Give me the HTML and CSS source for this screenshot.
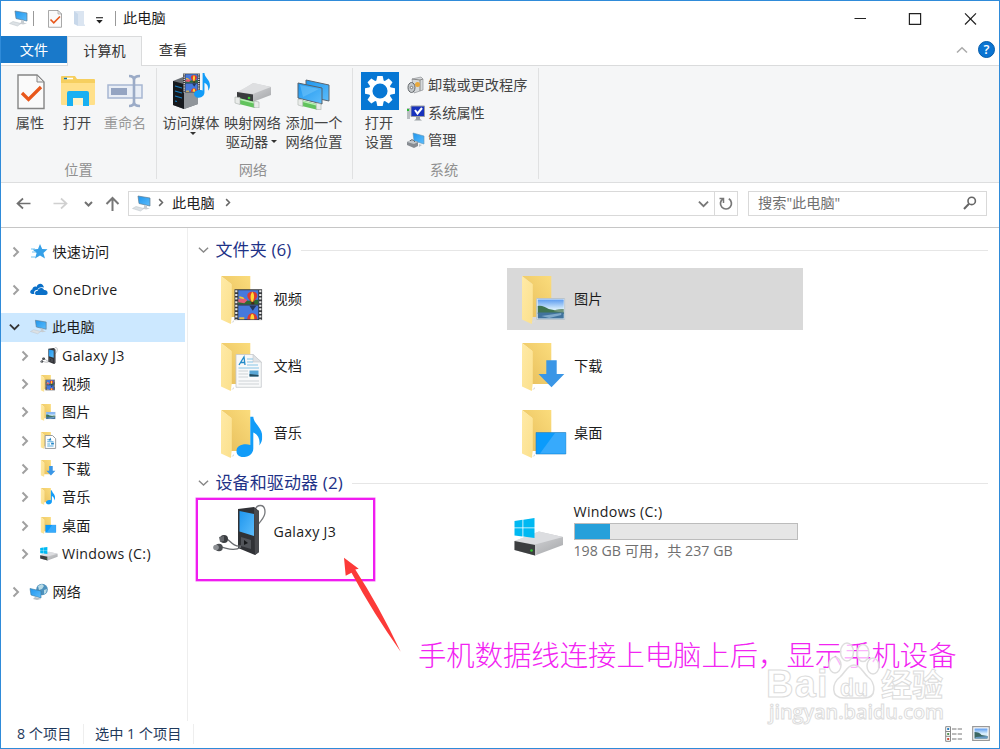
FILE: index.html
```html
<!DOCTYPE html>
<html lang="zh-CN">
<head>
<meta charset="utf-8">
<title>此电脑</title>
<link rel="stylesheet" href="styles.css">
</head>
<body>
<svg class="defs" aria-hidden="true">
  <defs>
    <linearGradient id="gBack" x1="0" y1="1" x2="1" y2="0"><stop offset="0" stop-color="#e6bd5a"/><stop offset="1" stop-color="#fbdc7c"/></linearGradient>
    <linearGradient id="gFlap" x1="0" y1="0" x2="1" y2="1"><stop offset="0" stop-color="#ffeaa6"/><stop offset="1" stop-color="#fbe08d"/></linearGradient>
    <linearGradient id="gScreen" x1="0" y1="0" x2="1" y2="1"><stop offset="0" stop-color="#1e96ee"/><stop offset="1" stop-color="#5cbcfb"/></linearGradient>
    <linearGradient id="gSky" x1="0" y1="0" x2="0" y2="1"><stop offset="0" stop-color="#5b9bf0"/><stop offset=".5" stop-color="#d5ecfb"/><stop offset="1" stop-color="#e4f1fa"/></linearGradient>
    <linearGradient id="gMetal" x1="0" y1="0" x2="1" y2="1"><stop offset="0" stop-color="#e4e4e6"/><stop offset="1" stop-color="#a4a6a9"/></linearGradient>
  </defs>
  <symbol id="folder" viewBox="0 0 48 50">
    <path d="M0 0H29.3V41H10V8z" fill="url(#gBack)"/>
    <path d="M0 0 10.8 8.2V40L9.8 48 0 43.6z" fill="url(#gFlap)"/>
    <path d="M10 47l3-3v2z" fill="#ddd"/>
  </symbol>
  <symbol id="film" viewBox="0 0 28 31">
    <path d="M0 0H28V31H0z" fill="#35373b"/>
    <path d="M4 1H24V15H4zM4 16.300H24V30H4z" fill="#4679dc"/>
    <path d="M4 11l5-1 5 1.500 10-1V15H4z" fill="#2d6a33"/>
    <path d="M4 10l6-1 3 2-3 3-6-1z" fill="#e35b74"/><path d="M5 7l4 1 1 2-5-1z" fill="#f3c634"/>
    <path d="M18 2.500c6 0 6 5.500 3 8l-2 2h-2l-2-2c-3-2.500-3-8 3-8z" fill="#dc3b30"/>
    <path d="M18 2.500c2.500 2 2 7 .5 10h-1C16 10 15.500 6 18 2.500z" fill="#ffd836"/>
    <path d="M17 13h3v2h-3z" fill="#4a2410"/><path d="M15 16.500h7l-3.500 5z" fill="#25375c"/>
    <path d="M13 30c0-8 10-8 10 0z" fill="#dc3b30"/><path d="M16 30c0-7 4-7 4 0z" fill="#ffd836"/><path d="M5 28h5v2H5z" fill="#e8bd45"/>
    <path d="M2 1.200V31M26 1.200V31" stroke="#e6e6e6" stroke-width="2.200" stroke-dasharray="2 1.600"/>
  </symbol>
  <symbol id="note" viewBox="0 0 26 41">
    <path d="M14 0h3c0 7 9 11 9 20 0 4-1 6-3 9 1-6-1-11-6-13V32c0 5-4 8-9 8.500S0 38 0 34.500c0-5 7-8 14-6z" fill="#129cf8"/>
  </symbol>
  <symbol id="photo" viewBox="0 0 29 22">
    <path d="M.5.5h28v21H.5z" fill="#f2f7fb" stroke="#b9c4cc"/>
    <path d="M1.500 1.500h26v19h-26z" fill="url(#gSky)"/>
    <path d="M1.500 8c4-1 7 1 11 3l15 3v2h-26z" fill="#3f7450"/><path d="M17 13c4-2 7-2 10.500-2v4z" fill="#71957c"/>
    <path d="M1.500 14.500h26v6h-26z" fill="#41739d"/><path d="M5 18l20-3v2l-12 3z" fill="#7fa9c9"/>
  </symbol>
  <symbol id="f-video" viewBox="0 0 48 50"><use href="#folder" width="48" height="50"/><use href="#film" x="13.300" y="13" width="28" height="31.300"/></symbol>
  <symbol id="f-photo" viewBox="0 0 48 50"><use href="#folder" width="48" height="50"/><use href="#photo" x="14" y="22" width="29.500" height="22"/></symbol>
  <symbol id="f-doc" viewBox="0 0 48 50"><use href="#folder" width="48" height="50"/>
    <path d="M15 11.500H32L40.300 19V44.300H15z" fill="#f8f9fa" stroke="#c5c8cb" stroke-width=".8"/><path d="M32 11.500V19h8.300z" fill="#dfe2e5" stroke="#c5c8cb" stroke-width=".6"/>
    <path d="M18 22l5-8 1 8M19.500 19.500h4.500" fill="none" stroke="#238bc9" stroke-width="1.300"/><path d="M26 16h6M26 19h6M26 22h11M17.500 25H38" stroke="#86c4e6"/>
    <path d="M28.500 27.500H37.500V33.500H28.500z" fill="#59a6d5"/><path d="M28.500 31l9 1v1.500h-9z" fill="#244c5e"/>
    <path d="M17.500 28H27M17.500 31H27M17.500 34H27M17.500 38H38M17.500 41H38" stroke="#ced3d6"/></symbol>
  <symbol id="f-down" viewBox="0 0 48 50"><use href="#folder" width="48" height="50"/><path d="M24.300 17.300H34.700V31H42.300L29.500 44.200 16.500 31H24.300z" fill="#3a96e6"/></symbol>
  <symbol id="f-music" viewBox="0 0 48 50"><use href="#folder" width="48" height="50"/><use href="#note" x="15.300" y="6.500" width="26" height="41"/></symbol>
  <symbol id="f-desk" viewBox="0 0 48 50"><use href="#folder" width="48" height="50"/><path d="M14 22.500H43.800V44H14z" fill="#0b9bfb" stroke="#287db8" stroke-width=".6"/><path d="M33 23H43.500V43.500H18z" fill="#37aafc"/></symbol>
  <symbol id="s-doc" viewBox="0 0 48 50"><use href="#folder" width="48" height="50"/><path d="M13 10H34L43 19V47H13z" fill="#fff" stroke="#8b9094" stroke-width="2.500"/><path d="M19 22h8M19 28h18M19 34h8M19 40h18" stroke="#55a9dc" stroke-width="3"/><path d="M28 16l-5 8h8zM30 31h8v5h-8z" fill="#2286c8"/></symbol>
  <symbol id="pc" viewBox="0 0 20 17">
    <path d="M6 1 18 3V11L7 8.500z" fill="url(#gScreen)" stroke="#5d7d94" stroke-width=".7"/>
    <path d="M12 10l3 .8v2l3 .6-4 1-4-1 2-.8z" fill="#c7cdd2"/>
    <path d="M.5 13.500 4 11.500 12 13.500 8.500 16z" fill="#dce1e5" stroke="#b9c0c6" stroke-width=".5"/>
  </symbol>
  <symbol id="drive" viewBox="0 0 50 40">
    <path d="M.5 24 25 14.500 49 20V28L21 38.500.5 33z" fill="url(#gMetal)"/>
    <path d="M.5 24 25 14.500 49 20 21 27.500z" fill="#dcdde0"/>
    <path d="M.5 24 21 28V38.500L.5 33z" fill="#3c3e40"/><path d="M21 28v10.500l2-.7V27.500z" fill="#c4c5c7"/>
    <circle cx="17.500" cy="33.500" r="1.300" fill="#35c62f"/>
  </symbol>
  <symbol id="winDrive" viewBox="0 0 50 40"><use href="#drive" width="50" height="40"/>
    <path d="M.5 4 8.500 2.800V10.500H.5zM9.300 2.700 20.500 1V10.500H9.300zM.5 11.300H8.500V19.500L.5 18.500zM9.300 11.300H20.500V21L9.300 19.600z" fill="#00b9f2"/></symbol>
  <symbol id="netDrive" viewBox="0 0 38 27">
    <path d="M3 11 19 1 37 5V13L19 20 3 17z" fill="url(#gMetal)"/><path d="M3 10 20 1 37 5 19 12z" fill="#dedfe1"/><path d="M3 10 19 12.500V20L3 17z" fill="#3a3c3e"/><circle cx="15" cy="16" r="1.300" fill="#39cc32"/>
    <use href="#pipe" x="0" y="14" width="26" height="12"/>
  </symbol>
  <symbol id="pipe" viewBox="0 0 26 12"><path d="M5 2 21 6V12L5 8z" fill="#62c35d"/><path d="M5 3 21 7" stroke="#b8efb4" stroke-width="1.500"/><path d="M1 1l5 .5v7L1 7zM20 5l5 1v6l-5-.5z" fill="#e8ebe9" stroke="#aab0ac" stroke-width=".6"/></symbol>
  <symbol id="player" viewBox="0 0 54 52">
    <path d="M42 7C43 0 52-1 52 8c0 6-5 9-7 13" fill="none" stroke="#77797c" stroke-width="1.300"/>
    <path d="M25 5 41 3 46 7V48L42 51 25 44z" fill="#303236"/><path d="M41 4 46 7V48L42 51z" fill="#494b4f"/>
    <path d="M26.500 7 41 10V32L26.500 27.500z" fill="url(#gScreen)"/>
    <path d="M28 33 38 36V45L28 42z" fill="#515459"/><path d="M31 36l4 3-4 2z" fill="#17191b"/>
    <path d="M13 34c5 4 8 9 15 8M8 43c6 1 13 5 20 0" fill="none" stroke="#696c70" stroke-width="1.300"/>
    <circle cx="11" cy="35" r="4" fill="#3a3d40"/><path d="M6 33l5-1v5l-4 1z" fill="#66696d"/>
    <circle cx="6" cy="43.500" r="3.800" fill="#4b4e52"/><circle cx="3" cy="43.500" r="2.800" fill="#8c8f93"/>
  </symbol>
  <symbol id="right" viewBox="0 0 8 12"><path d="M1.500 1.500 6 6 1.500 10.500" fill="none" stroke="currentColor" stroke-width="2"/></symbol>
  <symbol id="down" viewBox="0 0 12 8"><path d="M1 1.500 6 6.300 11 1.500" fill="none" stroke="currentColor" stroke-width="1.500"/></symbol>
  <symbol id="checkDoc" viewBox="0 0 28 36"><path d="M1 1H20L27 8V34.500H1z" fill="#fafafa" stroke="#858585" stroke-width="1.400"/><path d="M20 1V8h7z" fill="#eee" stroke="#858585"/><path d="M5 19 11.500 25.500 24 13" fill="none" stroke="#e8571b" stroke-width="3.300"/></symbol>
</svg>

<div class="window">
  <header class="titlebar">
    <svg class="tb-pc"><use href="#pc"/></svg>
    <i class="tb-sep"></i>
    <svg class="tb-check"><use href="#checkDoc"/></svg>
    <svg class="tb-folder" viewBox="0 0 12 17"><path d="M1 1h10v13l1 1v1H5z" fill="#dbe5f1"/><path d="M1 1l4 3v12l-4-2z" fill="#c8d8ea"/></svg>
    <svg class="tb-drop" viewBox="0 0 7 7"><path d="M0 .7h7" stroke="#333" stroke-width="1.200"/><path d="M.3 3h6.400L3.500 6.500z" fill="#222"/></svg>
    <i class="tb-sep tb-sep2"></i>
    <span class="title">此电脑</span>
    <svg class="controls" viewBox="0 0 120 14"><g fill="none" stroke="#222" stroke-width="1.200"><path d="M.5 6.500H12M55.400 1.600H66.600V12.400H55.400zM111 1.300 122 12.500M122 1.300 111 12.500"/></g></svg>
  </header>

  <nav class="tabs">
    <span class="tab file">文件</span><span class="tab active">计算机</span><span class="tab view">查看</span>
    <svg class="collapse"><use href="#down"/></svg>
    <span class="help">?</span>
  </nav>

  <section class="ribbon">
    <div class="group g1">
      <div class="buttons">
        <div class="big w46"><div class="ico doc"><svg width="28" height="36"><use href="#checkDoc"/></svg></div>属性</div>
        <div class="big w48"><div class="ico open-ico"><svg width="36" height="36" viewBox="0 0 36 36"><path d="M1 3q0-1 1-1h13l2 3h17q1 0 1 1v24H1z" fill="#f6cf5f"/><path d="M1 9h34v21q0 1-1 1H2q-1 0-1-1z" fill="#ffe08a"/><path d="M4 4.500h9" stroke="#fff" stroke-width="1.500"/><path d="M4 4.500h3" stroke="#17a" stroke-width="1.500"/><path d="M7 19q0-2 2-2h18q2 0 2 2v13h-6v-8H13v8H7z" fill="#18b0f2"/><path d="M13 24h10v7H13z" fill="#fff2c5"/></svg></div>打开</div>
        <div class="big w48 disabled"><div class="ico"><svg width="36" height="36" viewBox="0 0 36 36"><path d="M1 11H35V24H1z" fill="#e9eef6" stroke="#a7b7d2" stroke-width="1.500"/><path d="M4 14H20V21H4z" fill="#94a4c2"/><path d="M22 2q5 0 5 4v22q0 4-5 4M33 2q-6 0-6 4v22q0 4 6 4" fill="none" stroke="#9babc7" stroke-width="2.600"/></svg></div>重命名</div>
      </div>
      <div class="caption">位置</div>
    </div>
    <div class="group g2">
      <div class="buttons">
        <div class="big w62"><div class="ico"><svg width="38" height="38" viewBox="0 0 38 38"><path d="M1 9 11 5 26 9V32L12 37 1 33z" fill="#6b7075"/><path d="M1 9 12 12V37L1 33z" fill="#16191d"/><path d="M12 12 26 9V32L12 37z" fill="#90959a"/><path d="M3 14l7 2M3 19l7 2M3 24l7 2M3 29l2 .5" stroke="#197fc1" stroke-width="1.200"/><use href="#film" x="11" y="1" width="17" height="20"/><use href="#note" x="22" y="1" width="16" height="25"/></svg></div>访问媒体<i class="tri below"></i></div>
        <div class="big w61"><div class="ico"><svg class="netd" width="38" height="27"><use href="#netDrive"/></svg></div>映射网络<br><span>驱动器<i class="tri"></i></span></div>
        <div class="big w62"><div class="ico"><svg class="netd" width="36" height="32" viewBox="0 0 36 32"><path d="M10 2 33 7V23L10 18z" fill="url(#gScreen)" stroke="#5c6670"/><path d="M2 5 26 10V26L2 20z" fill="url(#gScreen)" stroke="#56616b"/><path d="M4 7 23 11 7 19z" fill="#77c7fa" opacity=".5"/><use href="#pipe" x="1" y="20" width="25" height="12"/></svg></div>添加一个<br>网络位置</div>
      </div>
      <div class="caption">网络</div>
    </div>
    <div class="group g3">
      <div class="buttons">
        <div class="big w46"><div class="ico"><svg class="gear" width="38" height="38" viewBox="0 0 38 38"><path d="M0 0H38V38H0z" fill="#0777d4"/><g transform="translate(19 19)" fill="#fff"><path id="tooth" d="M-2.700-15h5.400l1 5h-7.400z"/><use href="#tooth" transform="rotate(45)"/><use href="#tooth" transform="rotate(90)"/><use href="#tooth" transform="rotate(135)"/><use href="#tooth" transform="rotate(180)"/><use href="#tooth" transform="rotate(225)"/><use href="#tooth" transform="rotate(270)"/><use href="#tooth" transform="rotate(315)"/><circle r="9.300" fill="none" stroke="#fff" stroke-width="3.500"/></g></svg></div>打开<br>设置</div>
        <div class="smalls">
          <div class="small"><svg viewBox="0 0 18 18"><path d="M5 3 14 1 16 3V14L7 17z" fill="#d5d8da" stroke="#909498" stroke-width=".7"/><path d="M5 3l8 1 3-1M13 4v11" fill="none" stroke="#888"/><ellipse cx="4.500" cy="11.500" rx="3.500" ry="5" fill="#c3c7ca" stroke="#63676b"/><circle cx="4.500" cy="11.500" r="1.200" fill="#fff" stroke="#777"/><circle cx="10.500" cy="8.500" r="2.500" fill="#e8a83c"/></svg>卸载或更改程序</div>
          <div class="small"><svg viewBox="0 0 18 18"><path d="M0 4h3v11H0z" fill="#b9bec2"/><path d="M1 5v2" stroke="#27be32" stroke-width="2"/><path d="M4 2H17.500V12.500H4z" fill="#1732bd" stroke="#9b9ea3"/><path d="M8 6l2.500 3.500L15 4" fill="none" stroke="#fff" stroke-width="2"/><path d="M9 13h4v2l2 1.500H7L9 15z" fill="#9a9fa4"/></svg>系统属性</div>
          <div class="small"><svg viewBox="0 0 18 18"><path d="M6 2 17 5V13L7 10z" fill="url(#gScreen)" stroke="#5f93b5" stroke-width=".6"/><path d="M12 13l3 1-3 2z" fill="#bcc2c7"/><path d="M0 11l4-2 7 2v4l-4 2-7-3z" fill="#878c92"/><path d="M0 11l4-2 7 2-4 2z" fill="#c2c7cb"/><path d="M3 10q2-3 5 1" fill="none" stroke="#60666b"/></svg>管理</div>
        </div>
      </div>
      <div class="caption">系统</div>
    </div>
  </section>

  <section class="addressbar">
    <svg class="arrows" viewBox="0 0 110 18"><g fill="none" stroke-width="1.700"><path d="M14.500 9.500H1.500M7 4.500 1.500 9.500 7 14.500" stroke="#707070"/><path d="M37.500 9.500H50.500M45 4.500l5.500 5L45 14.500" stroke="#d0d0d0"/><path d="M69 8l3.500 3.500L76 8" stroke="#727272" stroke-width="2"/><path d="M96.500 17V4M90.500 10l6-6 6 6" stroke="#777" stroke-width="2"/></g></svg>
    <div class="path">
      <svg class="path-pc"><use href="#pc"/></svg><svg class="chev c1"><use href="#right"/></svg><span>此电脑</span><svg class="chev c2"><use href="#right"/></svg>
      <svg class="path-drop" viewBox="0 0 12 8"><path d="M1 1.500 6 6.300 11 1.500" fill="none" stroke="#777" stroke-width="2"/></svg>
      <div class="refresh"><svg viewBox="0 0 16 16"><path d="M4.800 3A5.500 5.500 0 1 0 10.800 2.800" fill="none" stroke="#777" stroke-width="1.700"/><path d="M1.500 2.500h4v4.500" fill="none" stroke="#777" stroke-width="1.500"/></svg></div>
    </div>
    <div class="search"><span>搜索"此电脑"</span><svg viewBox="0 0 14 14"><circle cx="8.700" cy="4.900" r="3.700" fill="none" stroke="#666" stroke-width="1.600"/><path d="M6 7.800 1 13" stroke="#666" stroke-width="2"/></svg></div>
  </section>

  <main class="body">
    <aside class="side">
      <div class="item top"><svg class="chev"><use href="#right"/></svg><svg class="si" viewBox="0 0 18 18"><path d="M10 1l2.200 5 5.300.3-4.100 3.600 1.600 5.600-5-3-5 3 1.600-5.600L2.600 6.500 8 6z" fill="#35a0e8"/><path d="M1 6h4M2 9h4M1 14h4" stroke="#70c1f0" stroke-width="1.200"/></svg>快速访问</div>
      <div class="item top"><svg class="chev"><use href="#right"/></svg><svg class="si" viewBox="0 0 18 18"><path d="M4.500 13H2.500C-.5 13-.5 9 2.300 8.500 2.500 6 5 5 6.500 6 8 1.500 13 1.500 14 6.500 10 5.500 8 7 7.500 9 4.500 9 3.500 11 4.500 13z" fill="#0b70c8"/><path d="M7 14c-2.500 0-3-4 .8-4.300C8 6.500 13 6 14 9c4-.5 5 5 1.500 5z" fill="#0b70c8"/></svg><span class="latin">OneDrive</span></div>
      <div class="item top selected"><svg class="chev open" viewBox="0 0 12 8"><path d="M1 1.500 6 6.300 11 1.500" fill="none" stroke="currentColor" stroke-width="2"/></svg><svg class="si"><use href="#pc"/></svg>此电脑</div>
      <div class="children">
        <div class="item"><svg class="chev"><use href="#right"/></svg><svg class="si"><use href="#player"/></svg><span class="latin">Galaxy J3</span></div>
        <div class="item"><svg class="chev"><use href="#right"/></svg><svg class="si"><use href="#f-video"/></svg>视频</div>
        <div class="item"><svg class="chev"><use href="#right"/></svg><svg class="si"><use href="#f-photo"/></svg>图片</div>
        <div class="item"><svg class="chev"><use href="#right"/></svg><svg class="si"><use href="#s-doc"/></svg>文档</div>
        <div class="item"><svg class="chev"><use href="#right"/></svg><svg class="si"><use href="#f-down"/></svg>下载</div>
        <div class="item"><svg class="chev"><use href="#right"/></svg><svg class="si"><use href="#f-music"/></svg>音乐</div>
        <div class="item"><svg class="chev"><use href="#right"/></svg><svg class="si"><use href="#f-desk"/></svg>桌面</div>
        <div class="item"><svg class="chev"><use href="#right"/></svg><svg class="si"><use href="#winDrive"/></svg><span class="latin">Windows (C:)</span></div>
      </div>
      <div class="item top"><svg class="chev"><use href="#right"/></svg><svg class="si" viewBox="0 0 18 18"><circle cx="12" cy="6.500" r="5.800" fill="#4d91bd"/><path d="M8 3l4-2 2 2-2 3-3 1zM14 7l3-1-1 4-2 1z" fill="#b8dae5"/><path d="M0 5.500 11 8V15L1 12z" fill="url(#gScreen)" stroke="#39789f" stroke-width=".6"/><path d="M5 14l4 1 2 1-4 1-4-1z" fill="#b7c0c6"/></svg>网络</div>
    </aside>

    <section class="content">
      <h2 class="heading"><svg><use href="#down"/></svg><span>文件夹 (6)</span><i></i></h2>
      <div class="tiles">
        <div class="tile"><svg><use href="#f-video"/></svg>视频</div>
        <div class="tile chosen"><svg><use href="#f-photo"/></svg>图片</div>
        <div class="tile"><svg><use href="#f-doc"/></svg>文档</div>
        <div class="tile"><svg><use href="#f-down"/></svg>下载</div>
        <div class="tile"><svg><use href="#f-music"/></svg>音乐</div>
        <div class="tile"><svg><use href="#f-desk"/></svg>桌面</div>
      </div>
      <h2 class="heading second"><svg><use href="#down"/></svg><span>设备和驱动器 (2)</span><i></i></h2>
      <div class="tiles devices">
        <div class="tile phone"><svg><use href="#player"/></svg><span class="latin">Galaxy J3</span></div>
        <div class="tile disk"><svg><use href="#winDrive"/></svg><div class="info"><div class="latin">Windows (C:)</div><div class="bar"><div style="width:16%"></div></div><div class="free">198 GB 可用，共 237 GB</div></div></div>
      </div>
    </section>
  </main>

  <footer class="status"><span class="count">8 个项目</span><span class="sel">选中 1 个项目</span>
    <svg class="v1" viewBox="0 0 18 16"><path d="M.7.700H5.500V15.300H.7zM.7 5.500H5.500M.7 10.300H5.500" fill="#fff" stroke="#888"/><path d="M7 3h4.500M12.700 3H17M7 8h4.500M12.700 8H17M7 13h4.500M12.700 13H17" stroke="#777"/><path d="M2.200 3h2" stroke="#287fc1" stroke-width="2"/><path d="M2.200 8h2" stroke="#549352" stroke-width="2"/><path d="M2.200 13h2" stroke="#cb4b36" stroke-width="2"/></svg>
    <svg class="v2" viewBox="0 0 18 15"><path d="M.7.700H17.300V14.300H.7z" fill="#fff" stroke="#999" stroke-width="1.200"/><path d="M2.500 2.500h13v10h-13z" fill="url(#gSky)"/><path d="M2.500 6q5 0 7 3l6 1v2.500h-13z" fill="#3b6762"/><path d="M4 11l11.500-1v2.500h-13z" fill="#6699c4"/></svg>
  </footer>
</div>

<div class="frame"></div>
<svg class="pointer" viewBox="0 0 60 98"><path d="M2 1.700 16.700 12.700 13.300 13.500Q37 50 58.700 95.700 31 57 9.500 16.800L3.700 19.700z" fill="#fc3a38"/></svg>
<div class="remark">手机数据线连接上电脑上后，显示手机设备</div>
<div class="watermark">
  <svg viewBox="0 0 52 60"><g fill="#fff" fill-opacity=".65" stroke="#dedede" stroke-width="1.500"><ellipse cx="19" cy="11" rx="6.500" ry="9"/><ellipse cx="35" cy="12" rx="6" ry="8.500"/><ellipse cx="7" cy="24" rx="6" ry="8"/><ellipse cx="45" cy="25" rx="6" ry="8"/><path d="M26 24c7 0 9 8 14 12 7 5 10 21-4 21H16C2 57 4 42 12 36c5-4 7-12 14-12z"/></g></svg>
  <span class="bai">Bai</span><span class="du">du</span><span class="jy">经验</span><span class="url">jingyan.baidu.com</span>
</div>
</body>
</html>
```
FILE: styles.css
```css
* { box-sizing: border-box; }
body { margin: 0; position: relative; width: 1000px; height: 749px; overflow: hidden; background: #fff; font: 14.2px/20px "Open Sans", "Noto Sans CJK SC", sans-serif; color: #1c1c1c; }
svg { flex: none; display: block; overflow: visible; }
i { flex: none; display: block; }
.defs { position: absolute; width: 0; height: 0; }
.window { width: 1000px; height: 749px; border: 1px solid #2f8bd9; display: flex; flex-direction: column; background: #fff; }

.titlebar { height: 35px; flex: none; display: flex; align-items: center; padding-left: 8px; }
.tb-pc { width: 20px; height: 17px; }
.tb-sep { width: 1px; height: 15px; background: #999; margin-left: 4px; }
.tb-check { width: 14px; height: 18px; margin-left: 14px; }
.tb-folder { width: 12px; height: 17px; margin-left: 11px; }
.tb-drop { width: 7px; height: 7px; margin: 4px 0 0 11px; }
.tb-sep2 { margin-left: 12px; }
.title { margin: -1px 0 0 7px; }
.controls { width: 120px; height: 14px; margin: 0 25px 0 auto; }

.tabs { height: 30px; flex: none; display: flex; align-items: flex-start; border-bottom: 1px solid #dadbdc; }
.tab { text-align: center; height: 27px; line-height: 28px; color: #333; }
.file { width: 66px; background: #1979ca; color: #fff; }
.active { width: 75px; height: 30px; border: 1px solid #dadbdc; border-bottom: 0; background: #f5f6f7; line-height: 27px; }
.view { width: 62px; }
.collapse { width: 12px; height: 8px; color: #aaa; transform: scaleY(-1); margin: 10px 10px 0 auto; }
.help { width: 17px; height: 17px; margin: 5px 4px 0 0; border-radius: 50%; background: #0a74d2; border: 1px solid #075ca9; color: #fff; font-size: 13px; line-height: 15px; text-align: center; font-weight: 600; }

.ribbon { height: 117px; flex: none; display: flex; background: #f5f6f7; border-bottom: 1px solid #dddedf; padding: 2px 0 3px; color: #444; }
.group { border-right: 1px solid #e0e1e2; display: flex; flex-direction: column; justify-content: space-between; }
.g1 { width: 156px; padding-left: 6px; }
.g2 { width: 196px; padding-left: 3px; }
.g3 { width: 186px; padding-left: 3px; }
.buttons { display: flex; padding-top: 4px; }
.big { text-align: center; white-space: nowrap; line-height: 19px; display: flex; flex-direction: column; align-items: center; }
.big br { display: none; }
.ico { height: 41px; display: flex; align-items: flex-start; padding-top: 2px; }
.doc, .open-ico { padding-left: 2px; }
.netd { margin-top: 10px; }
.g2 .ico { padding-top: 0; }
.g3 .ico { padding-top: 0; }
.g2 .w62:last-child .netd { margin-top: 6px; }
.w46 { width: 46px; }
.w48 { width: 48px; }
.w61 { width: 61px; }
.w62 { width: 62px; }
.w46, .w62, .w61 { white-space: normal; }
.g3 .w46 { padding: 0 8px; }
.g3 .ico { width: 38px; margin: 0 -4px; padding-left: 1px; }
.big span { display: flex; align-items: center; margin-left: -2px; }
.disabled { color: #999; }
.tri { width: 0; height: 0; border: 3px solid transparent; border-top-color: #333; border-bottom: 0; margin-left: 3px; }
.below { margin: 0 0 0 4px; }
.smalls { padding: 0 0 0 5px; }
.small { height: 27.500px; display: flex; align-items: center; gap: 3px; white-space: nowrap; padding-bottom: 1px; }
.small svg { width: 18px; height: 18px; }
.caption { text-align: center; color: #909090; line-height: 18px; }
.g1 .caption { margin-left: -6px; }
.g2 .caption, .g3 .caption { margin-left: -6px; }

.addressbar { height: 45px; flex: none; display: flex; align-items: center; padding: 0 12px 4px 0; border-bottom: 1px solid #c6c6c6; }
.arrows { width: 110px; height: 18px; margin-left: 15px; }
.path { width: 610px; height: 25px; margin-left: 2px; border: 1px solid #d9d9d9; display: flex; align-items: center; color: #222; }
.path span { margin-top: -1px; }
.path-pc { width: 20px; height: 17px; margin-left: 3px; }
.chev { width: 8px; height: 12px; color: #a0a0a0; }
.c1, .c2 { width: 6px; height: 9px; color: #666; margin-top: -2px; }
.c1 { margin-right: 8px; margin-left: 6px; }
.c2 { margin-left: 10px; }
.path-drop { width: 11px; height: 8px; margin: 2px 5px 0 auto; }
.refresh { width: 23px; height: 23px; border-left: 1px solid #d9d9d9; padding: 4px 3px; }
.refresh svg { width: 16px; height: 16px; }
.search { width: 239px; height: 25px; margin-left: auto; border: 1px solid #d9d9d9; display: flex; justify-content: space-between; align-items: center; padding: 0 9px 0 9px; color: #707070; }
.search svg { width: 14px; height: 14px; }

.body { flex: 1; min-height: 0; display: flex; }
.side { width: 187px; padding-top: 9.500px; border-right: 1px solid #eee; display: flex; flex-direction: column; gap: 9.600px; }
.item { height: 28.300px; display: flex; align-items: center; white-space: nowrap; padding-left: 10.500px; }
.item .si { width: 18px; height: 18px; margin: 0 5px 0 10px; }
.item .chev { flex: none; }
.children { margin-top: -9.600px; }
.children .item { padding-left: 20px; }
.children .si { width: 18px; height: 17.500px; margin: 0 4px 0 11px; }
.selected { background: #cce8ff; width: 184px; padding-left: 8px; }
.item .open { width: 11px; height: 8px; color: #333; margin-right: -1px; }
.item .open + .si { margin: 0 4px 0 11px; }
.latin { letter-spacing: .32px; }
.content { flex: 1; padding: 11px 11px 0; }
.heading { margin: 0; height: 22px; display: flex; align-items: center; font-weight: 400; font-size: 17px; line-height: 22px; color: #1e3287; }
.heading svg { width: 11px; height: 8px; color: #888; margin: 0 7px 0 -1.500px; }
.heading span { letter-spacing: .12px; }
.heading i { flex: 1; height: 1px; background: #e6e6e6; margin-left: 9px; }
.tiles { display: grid; grid-template-columns: 296px 296px; column-gap: 4.500px; row-gap: 5.300px; padding: 6.500px 0 0 7.500px; }
.tile { height: 62px; display: flex; align-items: flex-start; padding: 8px 0 0 14.500px; line-height: 45px; }
.tile > svg { width: 48px; height: 50px; margin-right: 4.500px; }
.chosen { background: #d9d9d9; }
.second { margin-top: 8px; }
.devices { padding-top: 6px; }
.phone { padding-left: 6px; padding-top: 4px; line-height: 55px; }
.phone > svg { width: 54px; height: 52px; margin-right: 7px; }
.disk { padding: 0 0 0 7px; line-height: 20px; }
.disk > svg { width: 50px; height: 40px; margin: 17px 9.500px 0 0; }
.info { padding-top: 3px; }
.info .latin { margin: -1px 0 1px; }
.bar { width: 224px; height: 17px; background: #e6e6e6; border: 1px solid #bcbcbc; }
.bar div { height: 100%; background: #26a0da; }
.free { color: #707070; padding-top: 1px; font-size: 14.200px; }

.status { height: 27px; flex: none; display: flex; align-items: center; padding: 0 9px 2px 16px; color: #1f3a5c; }
.count { width: 67px; border-right: 1px solid #eee; white-space: nowrap; }
.sel { margin-left: 11px; padding-right: 12px; border-right: 1px solid #eee; }
.v1 { width: 18px; height: 16px; margin: 0 9px 0 auto; }
.v2 { width: 18px; height: 15px; }

.frame { position: absolute; left: 196px; top: 498px; width: 179px; height: 83px; border: 2px solid #f01cf0; box-shadow: 0 0 0 .5px #f560f5; }
.pointer { position: absolute; left: 342px; top: 556px; width: 60px; height: 98px; }
.remark { position: absolute; left: 418px; top: 635px; font: 300 28.350px/38px "Noto Sans CJK SC", sans-serif; color: #f224f2; white-space: nowrap; }
.watermark { position: absolute; left: 766px; top: 641px; width: 185px; height: 92px; color: rgba(255, 255, 255, .8); -webkit-text-stroke: 1px #dcdcdc; }
.watermark svg { position: absolute; left: 62px; top: 0; width: 52px; height: 60px; }
.watermark span { position: absolute; white-space: nowrap; }
.bai { left: 0; top: 24px; font: 700 38px/38px "Liberation Sans", sans-serif; letter-spacing: 1.200px; }
.du { left: 74px; top: 34px; font: 700 23px/26px "Liberation Sans", sans-serif; }
.jy { left: 115px; top: 24px; font: 700 31px/36px "Noto Sans CJK SC", sans-serif; }
.url { left: 3px; top: 59px; font: 600 19.800px/24px "Open Sans", sans-serif; }
```
